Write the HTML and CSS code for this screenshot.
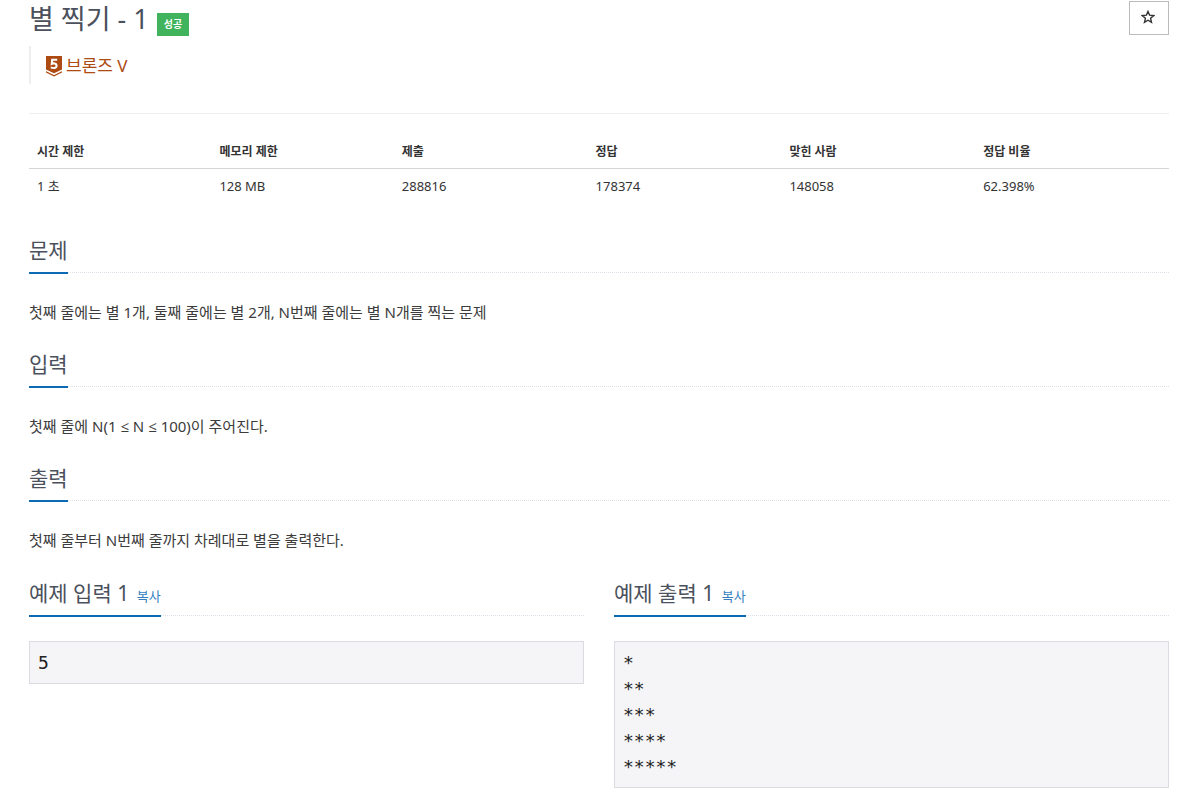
FILE: index.html
```html
<!DOCTYPE html>
<html lang="ko">
<head>
<meta charset="utf-8">
<meta name="viewport" content="width=device-width, initial-scale=1">
<title>별 찍기 - 1</title>
<link rel="stylesheet" href="styles.css">
</head>
<body>
<main class="container">
  <header class="page-header">
    <div class="title-row">
      <h1 class="title">별 찍기 - 1</h1>
      <span class="label-success">성공</span>
      <button class="star-button" type="button" aria-label="즐겨찾기">
        <svg width="14" height="14" viewBox="0 0 14 14" aria-hidden="true"><path d="M7 1.4 8.6 5.2 12.7 5.6 9.6 8.3 10.5 12.3 7 10.2 3.5 12.3 4.4 8.3 1.3 5.6 5.4 5.2Z" fill="none" stroke="#333" stroke-width="1.4"/></svg>
      </button>
    </div>
    <blockquote class="tier">
      <svg class="tier-icon" width="16" height="21" viewBox="0 0 16 21" aria-hidden="true">
        <path d="M0 0H16V13.5L8 17.3 0 13.5Z" fill="#ad4b12"/>
        <path d="M0 15.8 8 19.8 16 15.8" fill="none" stroke="#ad4b12" stroke-width="1.3"/>
        <path d="M11.2 3.8H6.2L5.8 7.8C7.5 7.1 10.6 7.1 10.6 9.6C10.6 12.4 7.3 12.5 4.8 11.4" fill="none" stroke="#fff" stroke-width="2.1"/>
      </svg>
      <span>브론즈 V</span>
    </blockquote>
  </header>
  <table class="info">
    <thead>
      <tr><th class="narrow">시간 제한</th><th class="narrow">메모리 제한</th><th>제출</th><th>정답</th><th>맞힌 사람</th><th>정답 비율</th></tr>
    </thead>
    <tbody>
      <tr><td>1 초</td><td>128 MB</td><td>288816</td><td>178374</td><td>148058</td><td>62.398%</td></tr>
    </tbody>
  </table>
  <section class="block">
    <div class="headline"><h2>문제</h2></div>
    <p class="text">첫째 줄에는 별 1개, 둘째 줄에는 별 2개, N번째 줄에는 별 N개를 찍는 문제</p>
  </section>
  <section class="block">
    <div class="headline"><h2>입력</h2></div>
    <p class="text">첫째 줄에 N(1 ≤ N ≤ 100)이 주어진다.</p>
  </section>
  <section class="block">
    <div class="headline"><h2>출력</h2></div>
    <p class="text">첫째 줄부터 N번째 줄까지 차례대로 별을 출력한다.</p>
  </section>
  <div class="samples">
    <section>
      <div class="headline"><h2>예제 입력 1 <button class="copy" type="button">복사</button></h2></div>
      <pre class="sample">5</pre>
    </section>
    <section>
      <div class="headline"><h2>예제 출력 1 <button class="copy" type="button">복사</button></h2></div>
      <pre class="sample">*
**
***
****
*****</pre>
    </section>
  </div>
</main>
</body>
</html>
```
FILE: styles.css
```css
* { box-sizing: border-box; }
body {
  margin: 0;
  background: #fff;
  color: #333;
  font-family: "Noto Sans", "Open Sans", "Noto Sans CJK KR", sans-serif;
  font-size: 13px;
  line-height: 18px;
}
.container { padding: 0 30px 12px 29px; }
.page-header { padding-bottom: 29px; border-bottom: 1px solid #eee; }
.title-row { display: flex; align-items: flex-start; height: 46px; }
.title { margin: 0; color: #4b515c; font-size: 27px; font-weight: 400; line-height: 38px; }
.label-success {
  margin: 13px 0 0 8px;
  padding: 0 7px;
  background: #41b35d;
  color: #fff;
  font-size: 10px;
  font-weight: 700;
  line-height: 23px;
}
.star-button {
  display: flex;
  align-items: center;
  justify-content: center;
  width: 40px;
  height: 34px;
  margin: 1px 0 0 auto;
  padding: 0 2px 2px 0;
  border: 1px solid #bbb;
  background: #fff;
}
.tier {
  display: flex;
  align-items: center;
  gap: 4px;
  height: 38px;
  margin: 0;
  padding: 2px 0 0 15px;
  border-left: 2px solid #eee;
  color: #ad4b12;
  font-size: 17px;
}
.info { width: 100%; margin-top: 20px; border-collapse: collapse; table-layout: fixed; }
.info th, .info td { padding: 8px; text-align: left; }
.info th { padding: 9px 8px 7px; border-bottom: 1px solid #d5d5d5; font-size: 12px; font-weight: 700; }
.narrow { width: 16%; }
.block { height: 114px; }
.info + .block { margin-top: 31px; }
.headline { display: flex; border-bottom: 1px dotted #dce1e9; }
.headline h2 {
  margin: 0 0 -2px;
  padding-bottom: 5px;
  border-bottom: 2px solid #0a6ab3;
  color: #4b515c;
  font-size: 21px;
  font-weight: 400;
  line-height: 33px;
}
.text { margin: 26px 0 0; color: #3c3c3c; font-size: 15px; line-height: 26px; }
.samples { display: grid; grid-template-columns: 1fr 1fr; gap: 30px; margin-top: 1px; }
.copy {
  margin: 0 0 0 2px;
  padding: 0;
  border: 0;
  background: none;
  color: #337fc0;
  font: inherit;
  font-size: 13px;
  line-height: 18px;
}
.sample {
  margin: 25px 0 0;
  padding: 8px 8px 7px;
  border: 1px solid #dadce2;
  background: #f5f5f8;
  color: #222;
  font-family: "DejaVu Sans Mono", monospace;
  font-size: 18px;
  line-height: 26px;
}
```
